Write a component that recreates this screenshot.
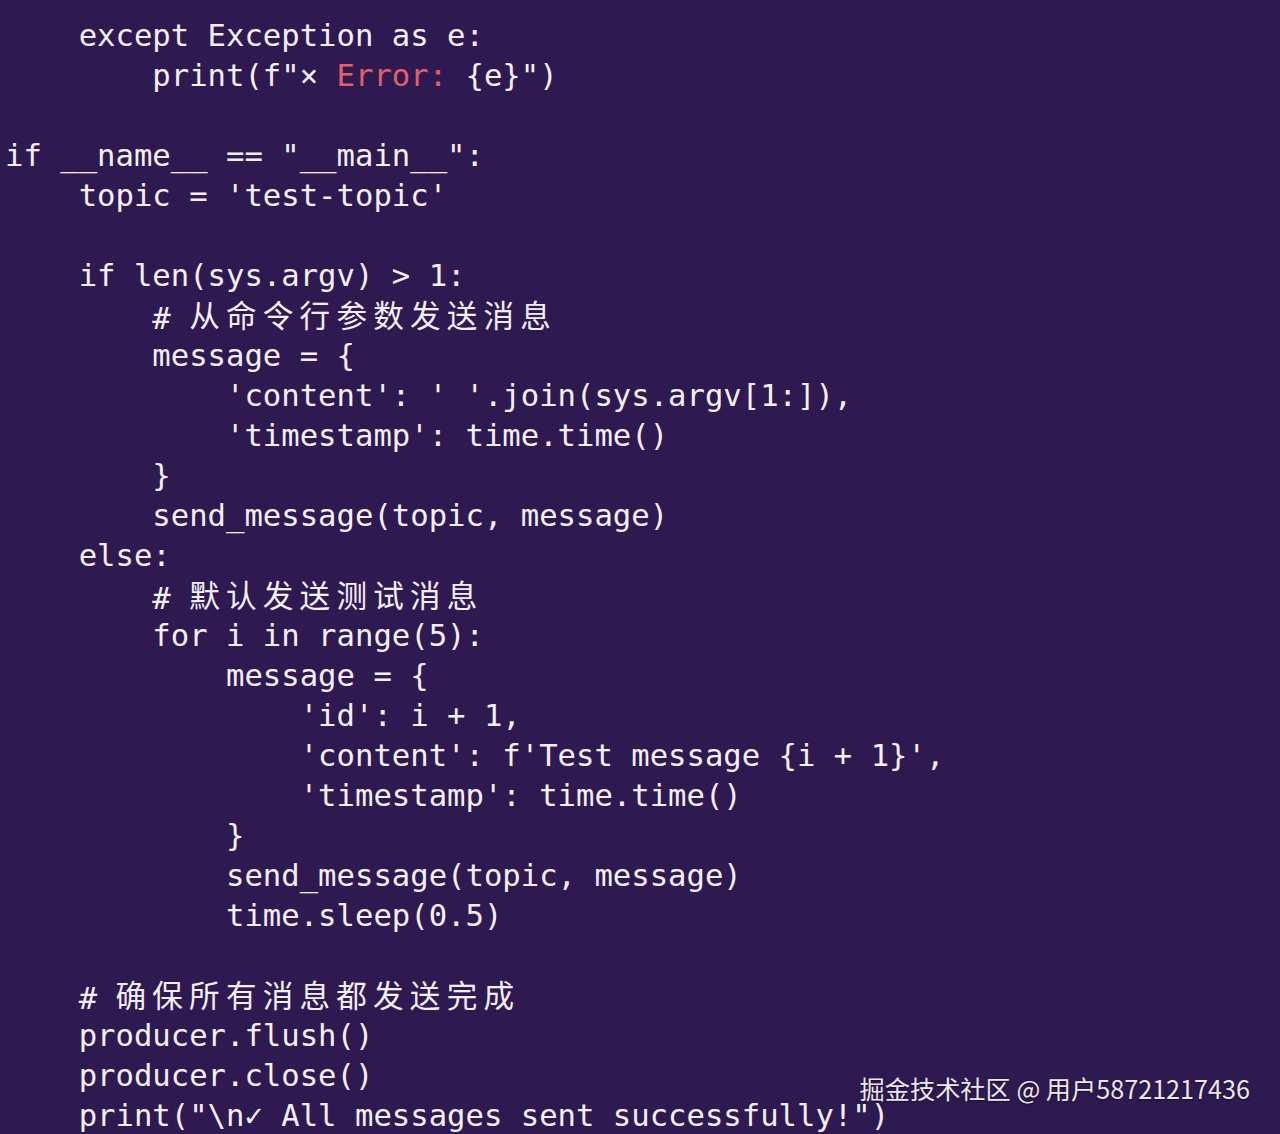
import React from "react";

type Seg = { t: string; k?: "red" | "cjk" };

const L = (...segs: (string | Seg)[]): Seg[] =>
  segs.map((s) => (typeof s === "string" ? { t: s } : s));

const lines: Seg[][] = [
  L("    except Exception as e:"),
  L('        print(f"× ', { t: "Error:", k: "red" }, ' {e}")'),
  L(""),
  L('if __name__ == "__main__":'),
  L("    topic = 'test-topic'"),
  L(""),
  L("    if len(sys.argv) > 1:"),
  L("        # ", { t: "从命令行参数发送消息", k: "cjk" }),
  L("        message = {"),
  L("            'content': ' '.join(sys.argv[1:]),"),
  L("            'timestamp': time.time()"),
  L("        }"),
  L("        send_message(topic, message)"),
  L("    else:"),
  L("        # ", { t: "默认发送测试消息", k: "cjk" }),
  L("        for i in range(5):"),
  L("            message = {"),
  L("                'id': i + 1,"),
  L("                'content': f'Test message {i + 1}',"),
  L("                'timestamp': time.time()"),
  L("            }"),
  L("            send_message(topic, message)"),
  L("            time.sleep(0.5)"),
  L(""),
  L("    # ", { t: "确保所有消息都发送完成", k: "cjk" }),
  L("    producer.flush()"),
  L("    producer.close()"),
  L('    print("\\n✓ All messages sent successfully!")'),
];

export default function App() {
  return (
    <div className="relative w-[1280px] h-[1134px] overflow-hidden bg-[#2e1a50]">
      <div className="pt-[16px] pl-[5px] font-['DejaVu_Sans_Mono','Noto_Sans_CJK_SC',monospace] text-[30.6px] leading-[40px] text-[#f4eff6]">
        {lines.map((segs, i) => (
          <div key={i} className="h-[40px] whitespace-pre">
            {segs.map((s, j) =>
              s.k === "red" ? (
                <span key={j} className="text-[#e0606c]">
                  {s.t}
                </span>
              ) : s.k === "cjk" ? (
                <span
                  key={j}
                  className="relative top-[-2px] font-['Noto_Sans_CJK_SC',sans-serif] tracking-[6.2px]"
                >
                  {s.t}
                </span>
              ) : (
                <span key={j}>{s.t}</span>
              )
            )}
          </div>
        ))}
      </div>
      <div className="absolute right-[30px] top-[1072px] font-['Noto_Sans_CJK_SC',sans-serif] text-[25.2px] leading-[32px] text-[#ece6ee] [text-shadow:0_1px_2px_rgba(0,0,0,0.5)] whitespace-nowrap">
        掘金技术社区 @ 用户58721217436
      </div>
    </div>
  );
}
